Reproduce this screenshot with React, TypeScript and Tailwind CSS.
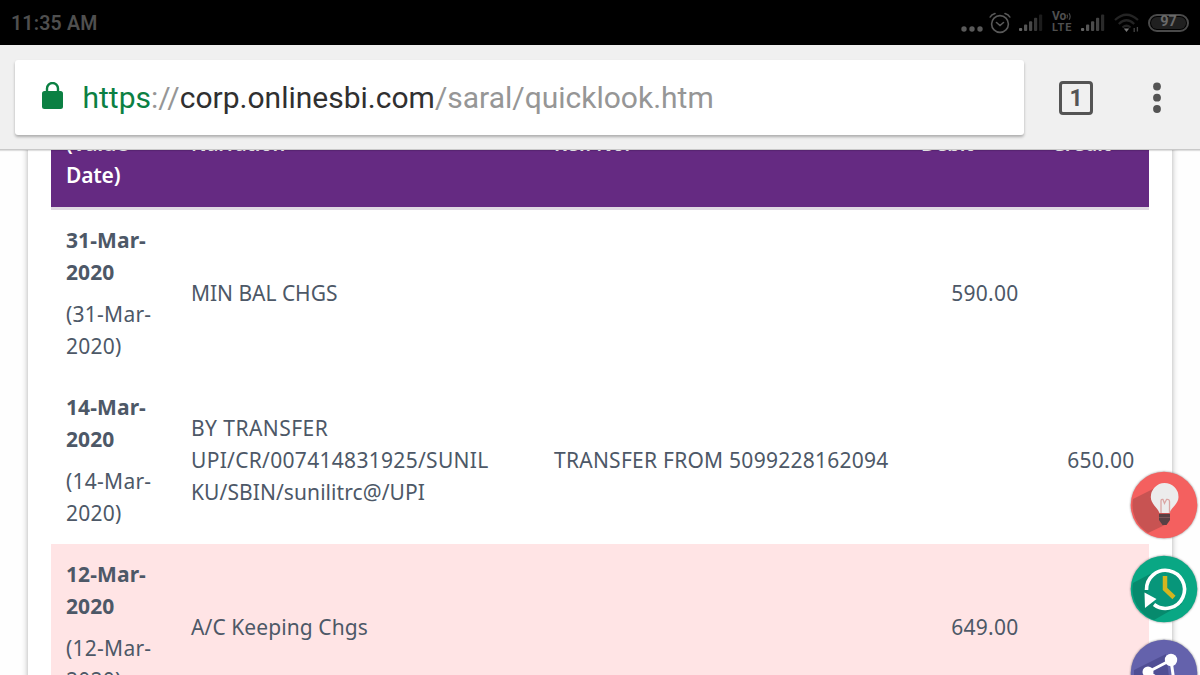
import { ReactNode } from "react";

const transactions = [
  {
    date: ["31-Mar-", "2020"],
    narration: [{ text: "MIN BAL CHGS", spacing: "tracking-[-0.03px]" }],
    reference: "",
    debit: "590.00",
    credit: "",
    bg: "bg-white",
  },
  {
    date: ["14-Mar-", "2020"],
    narration: [
      { text: "BY TRANSFER", spacing: "tracking-[0.45px]" },
      { text: "UPI/CR/007414831925/SUNIL", spacing: "tracking-[0.3px]" },
      { text: "KU/SBIN/sunilitrc@/UPI", spacing: "tracking-[0.08px]" },
    ],
    reference: "TRANSFER FROM 5099228162094",
    debit: "",
    credit: "650.00",
    bg: "bg-white",
  },
  {
    date: ["12-Mar-", "2020"],
    narration: [{ text: "A/C Keeping Chgs", spacing: "tracking-[0.08px]" }],
    reference: "",
    debit: "649.00",
    credit: "",
    bg: "bg-[#ffe4e5]",
  },
];

const Signal = ({ colors }: { colors: string[] }) => {
  return (
    <svg width="25" height="20" viewBox="0 0 25 20">
      {colors.map((color, i) => (
        <rect
          key={i}
          x={i * 5}
          y={15 - i * 3.4}
          width="3.2"
          height={3 + i * 3.4}
          rx="1"
          fill={color}
        />
      ))}
    </svg>
  );
};

const StatusBar = () => {
  return (
    <div className="h-[45px] bg-black text-[#4f4f4f] flex items-center justify-between pl-[11px] pr-[11px]">
      <span className="mt-0.5 text-[19.5px] font-semibold tracking-[0.2px]">11:35 AM</span>
      <div className="flex items-center">
        <svg width="22" height="8" viewBox="0 0 22 8" className="mt-[12px]" fill="#595959">
          <circle cx="3" cy="4" r="2.7" />
          <circle cx="11" cy="4" r="2.7" />
          <circle cx="19" cy="4" r="2.7" />
        </svg>
        <svg width="22" height="22" viewBox="0 0 22 22" className="ml-[6px]" fill="none" stroke="#595959" strokeWidth="1.6" strokeLinecap="round">
          <circle cx="11" cy="12" r="8.4" />
          <path d="M7.5 10.500 11 13.500l3.500-3M1.200 5Q2.500 2.500 6 1.500M20.800 5Q19.500 2.500 16 1.500" />
        </svg>
        <div className="ml-[8px] mt-px">
          <Signal colors={["#666", "#555", "#484848", "#363636", "#1c1c1c"]} />
        </div>
        <div className="ml-[8px] w-5 mb-0.5 flex flex-col text-[11px] leading-[11px] font-bold">
          <div className="flex items-center text-[12px]">
            Vo
            <svg width="6" height="9" viewBox="0 0 6 9" fill="none" stroke="#4f4f4f" strokeWidth="1.1">
              <path d="M1 2.500q1.300 2 0 4M3.200 1q2.400 3.500 0 7" />
            </svg>
          </div>
          <svg width="20" height="11" viewBox="0 0 20 11" className="overflow-visible">
            <text x="0" y="9" textLength="19.500" fontSize="11" fill="#4f4f4f">
              LTE
            </text>
          </svg>
        </div>
        <div className="ml-[9px] mt-px">
          <Signal colors={["#666", "#555", "#4c4c4c", "#444", "#2a2a2a"]} />
        </div>
        <svg width="26" height="20" viewBox="0 0 26 20" className="ml-[8px]" fill="none" strokeWidth="2.2">
          <path d="M1 7Q12.500-3.500 24 7M4.800 11Q12.500 3.500 20.200 11M8.500 14.500q4-3.500 8 0" stroke="#242424" />
          <path d="M9.800 15.500h5.400L12.500 19Z" fill="#777" />
          <path d="M20.200 15v4M23.400 14v4.500" stroke="#444" strokeWidth="1.3" />
        </svg>
        <div className="ml-[8px] w-[41px] h-[18px] rounded-full border-2 border-[#4a4a4a] p-px">
          <div className="h-full rounded-full bg-[#202020] text-[#696969] flex items-center justify-center text-[14.5px] leading-none font-bold">
            97
          </div>
        </div>
      </div>
    </div>
  );
};

const Toolbar = () => {
  return (
    <div className="relative z-10 h-[105px] bg-[#f0f0f0] border-b border-[#c9c9c9] shadow-[0_1px_1px_rgba(0,0,0,0.12)] flex items-center">
      <div className="ml-[15px] w-[1009px] h-[75px] bg-white rounded-[3px] shadow-[0_2px_3px_rgba(0,0,0,0.28)] flex items-center pl-[27px]">
        <svg width="21" height="27" viewBox="0 0 21 27" className="mb-[3px]">
          <rect x="0" y="9" width="21" height="18" rx="2.5" fill="#0b8043" />
          <path d="M5 10V6.500a5.500 5.500 0 0 1 11 0V10" fill="none" stroke="#0b8043" strokeWidth="2.4" />
        </svg>
        <div className="ml-[19.5px] text-[30px] whitespace-nowrap text-[#969696]">
          <span className="text-[#0b8043]">https</span>://
          <span className="text-[#303030]">corp.onlinesbi.com</span>/saral/quicklook.htm
        </div>
      </div>
      <div className="ml-[35px] mt-0.5 w-[34px] h-[34px] border-[3.5px] border-[#545454] rounded-[4px] flex items-center justify-center text-[#545454] text-[23px] leading-none font-bold">
        1
      </div>
      <svg width="8" height="32" viewBox="0 0 8 32" className="ml-[60px] mt-0.5" fill="#545454">
        <circle cx="4" cy="4.500" r="3.9" />
        <circle cx="4" cy="15.700" r="3.9" />
        <circle cx="4" cy="27" r="3.9" />
      </svg>
    </div>
  );
};

const Fab = ({ color, children }: { color: string; children: ReactNode }) => {
  return (
    <svg width="68" height="68" viewBox="0 0 68 68" className="drop-shadow-[0_0_1px_rgba(0,0,0,0.45)]">
      <circle cx="34" cy="34" r="33.3" fill={color} />
      {children}
    </svg>
  );
};

const FloatingActions = () => {
  return (
    <div className="absolute z-20 left-[1130px] top-[470.5px] flex flex-col gap-4">
      <Fab color="#f4605f">
        <path d="M25 17 3 28A33 33 0 0 0 18 62l19-9 4-15Z" fill="#c85352" />
        <path d="M34.500 12a14 14 0 0 0-13.700 14c0 7 6.500 10 8.700 16h10c2-6 9-9 9-16A14 14 0 0 0 34.500 12Z" fill="#ececec" />
        <path d="M31 42V30q0-2 2-1.500l1.500 4 2-4q3-.5 3 2V42" fill="none" stroke="#dba5a3" strokeWidth="1.3" />
        <path d="M29 43h11v6l-3.500 5h-4L29 49Z" fill="#584044" />
        <path d="M29 46.500h11" stroke="#7b5558" />
      </Fab>
      <Fab color="#09a784">
        <path d="M20 19 3 28A33 33 0 0 0 24 65l28-16Z" fill="#078a6d" />
        <circle cx="35" cy="34" r="18" fill="#07967a" />
        <path d="M16.500 35A19 19 0 1 1 24 49.500" fill="none" stroke="#fff" strokeWidth="3.6" />
        <path d="m14.500 37.500 12 6.500-11.500 9Z" fill="#fff" />
        <path d="M35 21v13l9 8.500" fill="none" stroke="#d3b51f" strokeWidth="4.5" />
      </Fab>
      <Fab color="#6462ac">
        <path d="M36 15 4 31v37h39Z" fill="#504e94" />
        <path d="m18 33 23-12 4 29Z" fill="none" stroke="#fff" strokeWidth="3" />
        <circle cx="41" cy="21" r="6.2" fill="#fff" />
        <circle cx="18" cy="33" r="5.5" fill="#fff" />
        <circle cx="45" cy="50" r="6" fill="#fff" />
      </Fab>
    </div>
  );
};

const Statement = () => {
  return (
    <div className="h-[525px] overflow-hidden bg-[#fefefe] px-7">
      <div className="h-[700px] bg-white shadow-[0_0_6px_rgba(0,0,0,0.32)] px-[23px] font-['Noto_Sans','Open_Sans',sans-serif] text-[21px] leading-8 text-[#4d5867]">
        <div className="-mt-[23px] grid grid-cols-[125px_363px_367px_131px_112px] h-[83px] bg-[#652a82] border-b-[3px] border-[#e0d9e3] pl-[15px] text-white font-semibold text-[20px]">
          <div className="text-[21px] tracking-[-0.2px]">
            <div>(Value</div>
            <div>Date)</div>
          </div>
          <div className="pt-px tracking-[-0.1px]">Narration</div>
          <div className="pt-px">Ref. No.</div>
          <div className="pt-px">Debit</div>
          <div className="pt-px">Credit</div>
        </div>
        {transactions.map((row) => (
          <div
            key={row.date[0]}
            className={`grid grid-cols-[125px_363px_350px_130px_116px] items-center h-[167px] pl-[15px] pb-0.5 whitespace-nowrap ${row.bg}`}
          >
            <div>
              <div className="font-bold tracking-[0.1px]">
                {row.date.map((line) => (
                  <div key={line}>{line}</div>
                ))}
              </div>
              <div className="mt-[10px] tracking-[0.25px]">
                <div>({row.date[0]}</div>
                <div>{row.date[1]})</div>
              </div>
            </div>
            <div>
              {row.narration.map((line) => (
                <div key={line.text} className={line.spacing}>
                  {line.text}
                </div>
              ))}
            </div>
            <div className="tracking-[0.25px]">{row.reference}</div>
            <div className="text-right pr-[15.5px] tracking-[0.25px]">{row.debit}</div>
            <div className="text-right pr-[15.5px] tracking-[0.25px]">{row.credit}</div>
          </div>
        ))}
      </div>
    </div>
  );
};

const App = () => {
  return (
    <div className="relative w-[1200px] h-[675px] overflow-hidden bg-white font-[Roboto,sans-serif]">
      <StatusBar />
      <Toolbar />
      <Statement />
      <FloatingActions />
    </div>
  );
};

export default App;
